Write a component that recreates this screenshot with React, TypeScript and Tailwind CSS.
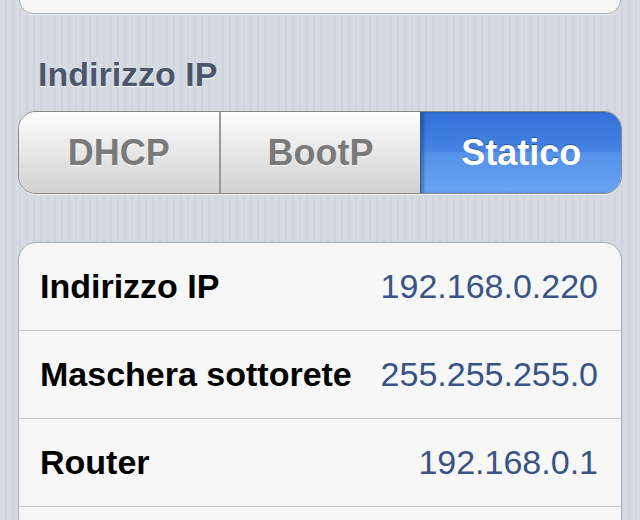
import React from 'react'

const rows = [
    { label: 'Indirizzo IP', value: '192.168.0.220' },
    { label: 'Maschera sottorete', value: '255.255.255.0' },
    { label: 'Router', value: '192.168.0.1' },
    { label: '', value: '' },
]

const App = () => {
    return (
        <div
            className="h-[520px] w-[640px] overflow-hidden bg-[repeating-linear-gradient(90deg,#d6dbe3_0px,#d6dbe3_5px,#d0d5de_5px,#d0d5de_7px)] px-[18px]"
            style={{ fontFamily: '"Liberation Sans", Arial, sans-serif' }}
        >
            {/* bottom of previous group */}
            <div className="mx-px h-[14px] rounded-b-[14px] border-x border-b border-[#a6aab2] bg-[#f7f7f7] shadow-[0_1px_0_#eef0f4]" />

            <div className="mt-[40px] mb-[17px] pl-[20px] text-[34px] font-bold leading-[40px] text-[#4c566c] [text-shadow:0_1px_0_#ffffff]">
                Indirizzo IP
            </div>

            <div className="flex h-[83px] overflow-hidden rounded-[18px] border border-[#8c8c8c] shadow-[0_1px_0_#eef0f4]">
                <div className="flex flex-1 items-center justify-center border-r-2 border-[#9a9a9a] bg-gradient-to-b from-[#fdfdfd] to-[#d2d2d2] text-[36px] font-bold text-[#7a7a7a] [text-shadow:0_1px_0_#ffffff]">
                    DHCP
                </div>
                <div className="flex flex-1 items-center justify-center bg-gradient-to-b from-[#fdfdfd] to-[#d2d2d2] text-[36px] font-bold text-[#7a7a7a] [text-shadow:0_1px_0_#ffffff]">
                    BootP
                </div>
                <div className="flex flex-1 items-center justify-center border-l border-[#2d5cae] bg-[linear-gradient(180deg,#3270d9_0%,#4683e3_50%,#5391ea_50%,#6aa5f2_100%)] text-[36px] font-bold text-white shadow-[inset_3px_0_3px_rgba(0,0,0,0.25)] [text-shadow:0_-1px_0_rgba(0,0,0,0.35)]">
                    Statico
                </div>
            </div>

            <div className="mt-[48px] overflow-hidden rounded-[18px] border border-[#a9adb4] bg-[#f7f7f7]">
                {rows.map((row, i) => (
                    <div
                        key={i}
                        className="flex h-[88px] items-center justify-between border-b border-[#c8c8c8] pl-[21px] pr-[23px] text-[34px]"
                    >
                        <span className="font-bold text-black">{row.label}</span>
                        <span className="text-[#385487]">{row.value}</span>
                    </div>
                ))}
            </div>
        </div>
    )
}

export default App
